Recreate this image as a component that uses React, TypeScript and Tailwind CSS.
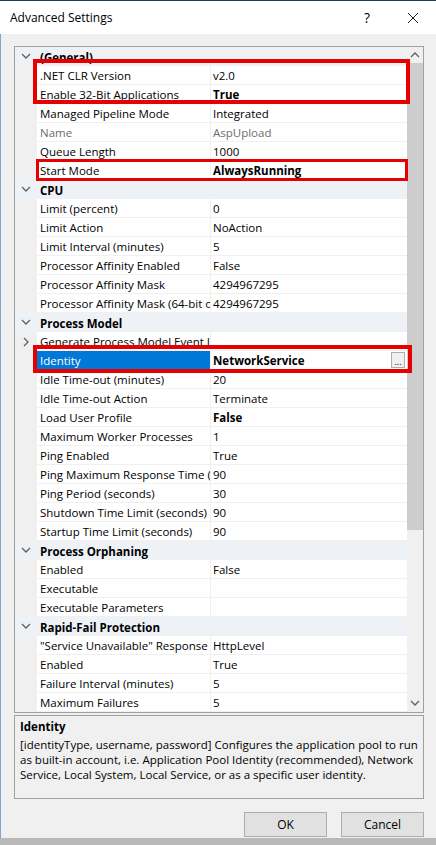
import React from "react";

type Row =
  | { cat: string }
  | {
      name: string;
      value?: string;
      bold?: boolean;
      dim?: boolean;
      expand?: boolean;
      selected?: boolean;
    };

const rows: Row[] = [
  { cat: "(General)" },
  { name: ".NET CLR Version", value: "v2.0" },
  { name: "Enable 32-Bit Applications", value: "True", bold: true },
  { name: "Managed Pipeline Mode", value: "Integrated" },
  { name: "Name", value: "AspUpload", dim: true },
  { name: "Queue Length", value: "1000" },
  { name: "Start Mode", value: "AlwaysRunning", bold: true },
  { cat: "CPU" },
  { name: "Limit (percent)", value: "0" },
  { name: "Limit Action", value: "NoAction" },
  { name: "Limit Interval (minutes)", value: "5" },
  { name: "Processor Affinity Enabled", value: "False" },
  { name: "Processor Affinity Mask", value: "4294967295" },
  { name: "Processor Affinity Mask (64-bit option)", value: "4294967295" },
  { cat: "Process Model" },
  { name: "Generate Process Model Event Log Entry", expand: true },
  { name: "Identity", value: "NetworkService", bold: true, selected: true },
  { name: "Idle Time-out (minutes)", value: "20" },
  { name: "Idle Time-out Action", value: "Terminate" },
  { name: "Load User Profile", value: "False", bold: true },
  { name: "Maximum Worker Processes", value: "1" },
  { name: "Ping Enabled", value: "True" },
  { name: "Ping Maximum Response Time (seconds)", value: "90" },
  { name: "Ping Period (seconds)", value: "30" },
  { name: "Shutdown Time Limit (seconds)", value: "90" },
  { name: "Startup Time Limit (seconds)", value: "90" },
  { cat: "Process Orphaning" },
  { name: "Enabled", value: "False" },
  { name: "Executable" },
  { name: "Executable Parameters" },
  { cat: "Rapid-Fail Protection" },
  { name: "\"Service Unavailable\" Response Type", value: "HttpLevel" },
  { name: "Enabled", value: "True" },
  { name: "Failure Interval (minutes)", value: "5" },
  { name: "Maximum Failures", value: "5" },
];

function Chevron({ dir }: { dir: "down" | "right" | "up" }) {
  const pts = dir === "down" ? "1,2 5,6 9,2" : dir === "up" ? "1,7 5,3 9,7" : "3,1 7,5 3,9";
  return (
    <svg width="10" height="10" viewBox="0 0 10 10">
      <polyline points={pts} fill="none" stroke="#606060" strokeWidth="1.3" />
    </svg>
  );
}

function GridRow({ row, first }: { row: Row; first: boolean }) {
  if ("cat" in row) {
    return (
      <div className={`flex h-[19px] items-center bg-[#eef2f7] ${first ? "-mt-[5px]" : ""}`}>
        <div className="flex w-[22px] justify-center">
          <Chevron dir="down" />
        </div>
        <span className="pl-[3px] pt-[2px] font-bold">{row.cat}</span>
      </div>
    );
  }
  return (
    <div className="flex h-[19px]">
      <div className="flex w-[22px] items-center justify-center bg-[#f0f0f0]">
        {row.expand && <Chevron dir="right" />}
      </div>
      <div
        className={`flex w-[173px] items-center overflow-hidden whitespace-nowrap border-b border-[#f0f0f0] pl-[3px] pt-[2px] ${
          row.selected ? "bg-[#0078d7] text-white" : "bg-white"
        } ${row.dim ? "text-[#6d6d6d]" : ""}`}
      >
        {row.name}
      </div>
      <div
        className={`flex flex-1 items-center border-b border-l border-[#f0f0f0] bg-white pl-[2px] ${
          row.bold ? "font-bold" : ""
        } ${row.dim ? "text-[#6d6d6d]" : ""}`}
      >
        <span className="flex-1 pt-[2px]">{row.value}</span>
        {row.selected && (
          <span className="mr-[2px] flex h-[16px] w-[14px] items-end justify-center border border-[#adadad] bg-[#f0f0f0] pb-[1px] text-[9px] font-normal leading-none">
            ...
          </span>
        )}
      </div>
    </div>
  );
}

export default function App() {
  return (
    <div className="relative flex h-[845px] w-[436px] flex-col bg-[#f0f0f0] font-['Open_Sans',sans-serif] text-[11.5px] leading-none text-black">
      {/* title bar */}
      <div className="flex h-[34px] items-center border-t border-[#1f3b5c] bg-white pl-[10px]">
        <span className="flex-1 text-[12px]">Advanced Settings</span>
        <span className="w-[46px] text-center text-[14px]">?</span>
        <span className="flex w-[46px] justify-center">
          <svg width="12" height="12" viewBox="0 0 12 12">
            <path d="M1 1 L11 11 M11 1 L1 11" stroke="#222" strokeWidth="1" />
          </svg>
        </span>
      </div>

      <div className="flex flex-1 flex-col border-l border-[#7aa7cf] pl-[13px] pr-[12px] pt-[12px]">
        {/* property grid */}
        <div className="flex h-[667px] border border-[#a0a0a0] bg-[#eef2f7]">
          <div className="flex-1 overflow-hidden pt-[5px]">
            <div className="overflow-hidden">
              {rows.map((r, i) => (
                <GridRow key={i} row={r} first={i === 0} />
              ))}
            </div>
          </div>
          <div className="flex w-[16px] flex-col bg-[#f0f0f0]">
            <div className="flex h-[16px] items-center justify-center">
              <Chevron dir="up" />
            </div>
            <div className="h-[467px] bg-[#cdcdcd]" />
            <div className="flex-1" />
            <div className="flex h-[16px] items-center justify-center">
              <Chevron dir="down" />
            </div>
          </div>
        </div>

        {/* description */}
        <div className="mt-[2px] h-[84px] border border-[#a0a0a0] px-[5px] pt-[3px] leading-[15px]">
          <div className="mb-[3px] font-bold">Identity</div>
          <div className="whitespace-nowrap">[identityType, username, password] Configures the application pool to run</div>
          <div className="whitespace-nowrap">as built-in account, i.e. Application Pool Identity (recommended), Network</div>
          <div className="whitespace-nowrap">Service, Local System, Local Service, or as a specific user identity.</div>
        </div>

        {/* buttons */}
        <div className="mt-[13px] flex justify-end gap-[14px]">
          <button className="h-[25px] w-[83px] border border-[#adadad] bg-[#e1e1e1] text-[12px]">OK</button>
          <button className="h-[25px] w-[83px] border border-[#adadad] bg-[#e1e1e1] text-[12px]">Cancel</button>
        </div>
      </div>
      <div className="h-[7px] bg-[#b9b9b9]" />

      {/* red highlight boxes */}
      <div className="absolute left-[33px] top-[59px] h-[45px] w-[377px] border-4 border-[#e60000]" />
      <div className="absolute left-[36px] top-[159px] h-[22px] w-[372px] border-[3px] border-[#e60000]" />
      <div className="absolute left-[33px] top-[345px] h-[28px] w-[379px] border-4 border-[#e60000]" />
    </div>
  );
}
